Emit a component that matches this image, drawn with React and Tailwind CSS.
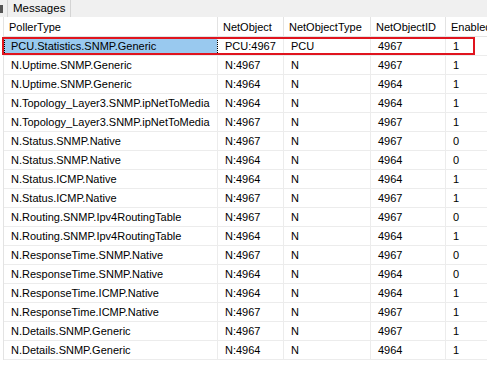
import React from 'react';

const rows = [
  ['PCU.Statistics.SNMP.Generic', 'PCU:4967', 'PCU', '4967', '1'],
  ['N.Uptime.SNMP.Generic', 'N:4967', 'N', '4967', '1'],
  ['N.Uptime.SNMP.Generic', 'N:4964', 'N', '4964', '1'],
  ['N.Topology_Layer3.SNMP.ipNetToMedia', 'N:4964', 'N', '4964', '1'],
  ['N.Topology_Layer3.SNMP.ipNetToMedia', 'N:4967', 'N', '4967', '1'],
  ['N.Status.SNMP.Native', 'N:4967', 'N', '4967', '0'],
  ['N.Status.SNMP.Native', 'N:4964', 'N', '4964', '0'],
  ['N.Status.ICMP.Native', 'N:4964', 'N', '4964', '1'],
  ['N.Status.ICMP.Native', 'N:4967', 'N', '4967', '1'],
  ['N.Routing.SNMP.Ipv4RoutingTable', 'N:4967', 'N', '4967', '0'],
  ['N.Routing.SNMP.Ipv4RoutingTable', 'N:4964', 'N', '4964', '1'],
  ['N.ResponseTime.SNMP.Native', 'N:4967', 'N', '4967', '0'],
  ['N.ResponseTime.SNMP.Native', 'N:4964', 'N', '4964', '0'],
  ['N.ResponseTime.ICMP.Native', 'N:4964', 'N', '4964', '1'],
  ['N.ResponseTime.ICMP.Native', 'N:4967', 'N', '4967', '1'],
  ['N.Details.SNMP.Generic', 'N:4967', 'N', '4967', '1'],
  ['N.Details.SNMP.Generic', 'N:4964', 'N', '4964', '1'],
];

const headers = ['PollerType', 'NetObject', 'NetObjectType', 'NetObjectID', 'Enabled'];
const widths = ['w-[214px]', 'w-[66px]', 'w-[87px]', 'w-[75px]', 'w-[60px]'];

export default function App() {
  return (
    <div className="w-[487px] h-[373px] overflow-hidden bg-white text-[11px] text-black" style={{ fontFamily: '"Liberation Sans", Arial, sans-serif' }}>
      {/* tab strip */}
      <div className="h-[17px] bg-[#f0f0f0] flex items-end relative">
        <div className="absolute left-0 top-[5px] w-[3px] h-[8px] bg-[#555]" />
        <div className="ml-[7px] h-[17px] px-[5px] border-x border-[#d4d4d4] bg-[#f0f0f0] flex items-center">
          <span className="text-[11.5px] leading-none pt-[1px]">Messages</span>
        </div>
      </div>

      {/* grid */}
      <div className="ml-[3px] border-l border-[#e3e3e3]">
        <div className="flex h-[20px] border-b border-[#e3e3e3]">
          {headers.map((h, i) => (
            <div key={h} className={`${widths[i]} shrink-0 border-r border-[#e3e3e3] flex items-center pl-[5px] pt-[2px] text-[11px] whitespace-nowrap overflow-hidden`}>
              {h}
            </div>
          ))}
        </div>
        {rows.map((r, ri) => (
          <div key={ri} className="flex h-[19px] border-b border-[#ececec] relative">
            {r.map((c, ci) => (
              <div
                key={ci}
                className={`${widths[ci]} shrink-0 border-r border-[#ececec] flex items-center pl-[7px] text-[11px] whitespace-nowrap overflow-hidden ${ri === 0 && ci === 0 ? 'bg-[#99c9ef] outline-1 outline-dotted outline-black -outline-offset-1' : ''}`}
              >
                {c}
              </div>
            ))}
            {ri === 0 && (
              <div className="absolute left-[-2px] top-0 w-[473px] h-[18px] border-2 border-[#e0141e] pointer-events-none" />
            )}
          </div>
        ))}
      </div>
    </div>
  );
}
